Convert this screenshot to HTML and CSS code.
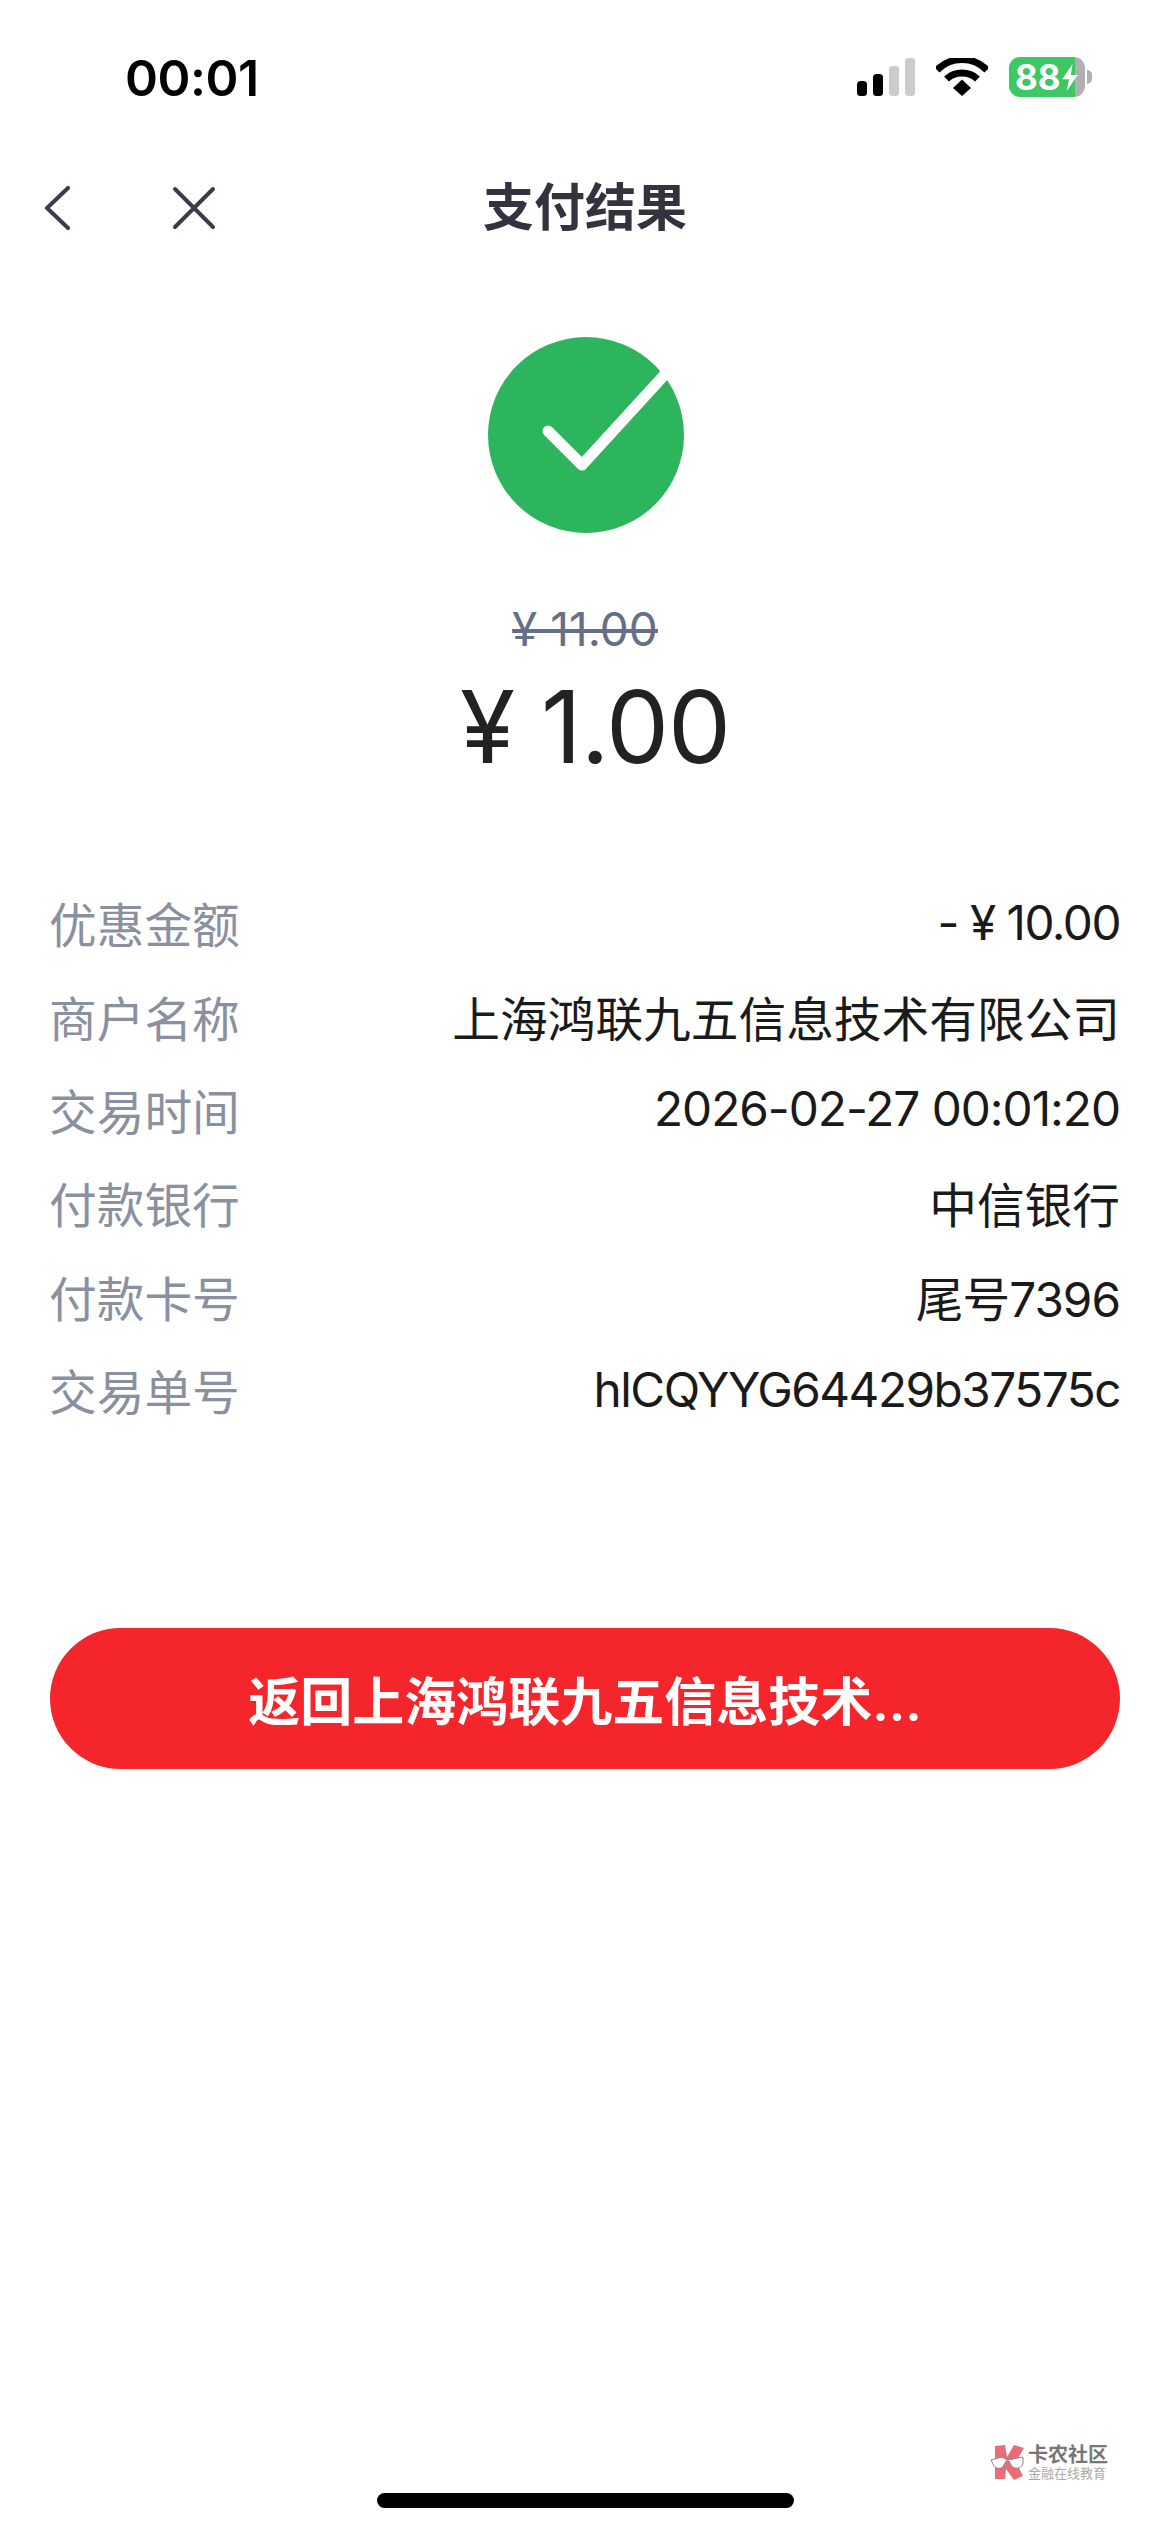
FILE: index.html
```html
<!DOCTYPE html>
<html lang="zh-CN">
<head>
<meta charset="utf-8">
<title>支付结果</title>
<link rel="stylesheet" href="styles.css">
</head>
<body>
<main class="screen">
  <header class="status">
    <span class="clock">00:01</span>
    <div class="status-icons">
      <svg class="signal" width="58" height="38" viewBox="0 0 58 38"><rect x="0" y="23" width="10" height="15" rx="3.5" fill="#000"/><rect x="16" y="16" width="10" height="22" rx="3.5" fill="#000"/><rect x="32" y="8" width="10" height="30" rx="3.5" fill="#ccc"/><rect x="48" y="0" width="10" height="38" rx="3.5" fill="#ccc"/></svg>
      <svg class="wifi" width="52" height="38" viewBox="0 0 52 38"><path d="M1 12 C15 -2 37 -2 51 12" fill="none" stroke="#000" stroke-width="7"/><path d="M10.5 21 C19 13 33 13 41.5 21" fill="none" stroke="#000" stroke-width="7"/><path d="M17 30 L26 21.5 L35 30 L26 38Z" fill="#000"/></svg>
      <div class="battery">
        <div class="battery-body"><span class="battery-num">88</span><svg class="bolt" width="18" height="29" viewBox="0 0 20 34"><path d="M13 1 L1 19 H9 L6 33 L19 14 H11Z" fill="#fff"/></svg></div>
        <span class="battery-cap"></span>
      </div>
    </div>
  </header>

  <nav class="nav">
    <div class="nav-icons">
      <svg width="26" height="44" viewBox="0 0 26 44"><path d="M24 2 L3 22 L24 42" fill="none" stroke="#3c3c4a" stroke-width="4" stroke-linecap="round" stroke-linejoin="round"/></svg>
      <svg width="44" height="44" viewBox="0 0 44 44"><path d="M3 3 L41 41 M41 3 L3 41" fill="none" stroke="#3c3c4a" stroke-width="4" stroke-linecap="round"/></svg>
    </div>
    <h1 class="title">支付结果</h1>
  </nav>

  <section class="result">
    <svg class="check" width="196" height="196" viewBox="0 0 196 196"><circle cx="98" cy="98" r="98" fill="#2db55d"/><path d="M60 94 L94 128 L180 34" fill="none" stroke="#fff" stroke-width="11" stroke-linecap="round" stroke-linejoin="round"/></svg>
    <p class="old-price">¥ 11.00</p>
    <p class="price">¥ 1.00</p>
  </section>

  <dl class="details">
    <div class="row"><dt>优惠金额</dt><dd class="num code">- ¥ 10.00</dd></div>
    <div class="row"><dt>商户名称</dt><dd>上海鸿联九五信息技术有限公司</dd></div>
    <div class="row"><dt>交易时间</dt><dd class="num">2026-02-27 00:01:20</dd></div>
    <div class="row"><dt>付款银行</dt><dd>中信银行</dd></div>
    <div class="row"><dt>付款卡号</dt><dd class="num">尾号7396</dd></div>
    <div class="row"><dt>交易单号</dt><dd class="num code">hlCQYYG64429b37575c</dd></div>
  </dl>

  <button class="back" type="button">返回上海鸿联九五信息技术...</button>

  <div class="watermark">
    <svg width="36" height="36" viewBox="0 0 36 36"><path d="M5 1 L15 0 L17 12 L24 0 L34 3 L26 17 L33 31 L24 35 L16 24 L15 34 L5 34Z" fill="#ea6c78"/><path d="M1 15 L12 12 L17 15 L23 14 L33 12 L33 18 C32 24 24 25 21 20 L19 16 H16 L14 20 C12 25 4 24 3 19Z" fill="#fff" stroke="#8a8a8a" stroke-width="1"/></svg>
    <div class="wm-text"><span class="wm-main">卡农社区</span><span class="wm-sub">金融在线教育</span></div>
  </div>
  <div class="home-bar"></div>
</main>
</body>
</html>
```
FILE: styles.css
```css
* { box-sizing: border-box; margin: 0; padding: 0; }
html, body { background: #fff; }
body {
  width: 1170px;
  height: 2532px;
  overflow: hidden;
  font-family: Inter, "Noto Sans CJK SC", sans-serif;
}
.screen { position: relative; width: 1170px; height: 2532px; display: flex; flex-direction: column; }

.status { height: 150px; padding: 48px 78px 0 125px; display: flex; justify-content: space-between; align-items: flex-start; }
.clock { font-size: 50px; font-weight: 600; line-height: 60px; color: #000; letter-spacing: -0.5px; }
.status-icons { display: flex; align-items: center; gap: 21px; padding-top: 9px; }
.battery { display: flex; align-items: center; gap: 2px; }
.battery-body {
  width: 76px; height: 40px; border-radius: 11px; display: flex; align-items: center; padding-left: 6px;
  background: linear-gradient(90deg, #3ec765 0 66px, #b0b0b0 66px);
}
.battery-num { font-size: 35px; font-weight: 700; line-height: 40px; color: #fff; }
.bolt { margin-left: 0; }
.battery-cap { width: 5px; height: 14px; border-radius: 0 7px 7px 0; background: #b0b0b0; }

.nav { position: relative; height: 116px; display: flex; align-items: center; justify-content: center; }
.nav-icons { position: absolute; left: 44px; top: 36px; display: flex; gap: 102px; }
.title { font-size: 51px; font-weight: 600; color: #333340; line-height: 60px; }

.result { display: flex; flex-direction: column; align-items: center; padding-top: 71px; }
.check { margin-left: 2px; }
.old-price { margin-top: 72px; font-size: 46px; line-height: 48px; color: #666f85; text-decoration: line-through; }
.price { margin-top: 15px; padding-left: 20px; font-size: 100px; font-weight: 400; line-height: 118px; color: #222; letter-spacing: -1px; }

.details { margin-top: 90px; padding: 0 50px 0 49px; display: flex; flex-direction: column; }
.row { height: 93.4px; display: flex; justify-content: space-between; align-items: center; }
dt { font-size: 47.7px; font-weight: 400; color: #8a90a0; }
dd { font-size: 47.7px; font-weight: 400; color: #1a1a1a; }
.num { letter-spacing: -1px; }
.num.code { letter-spacing: -1.5px; }

.back {
  display: block; margin: 192px 50px 0; height: 141px; border: 0; border-radius: 71px;
  background: #f5252c; color: #fff; font-family: inherit; font-size: 52px; font-weight: 600;
}

.watermark { position: absolute; left: 990px; top: 2444px; display: flex; align-items: center; gap: 2px; }
.wm-text { display: flex; flex-direction: column; }
.wm-main { font-size: 20px; line-height: 22px; font-weight: 700; color: #777; }
.wm-sub { font-size: 13px; line-height: 15px; color: #aaa; }

.home-bar { position: absolute; left: 377px; top: 2493px; width: 417px; height: 15px; border-radius: 8px; background: #000; }
```
